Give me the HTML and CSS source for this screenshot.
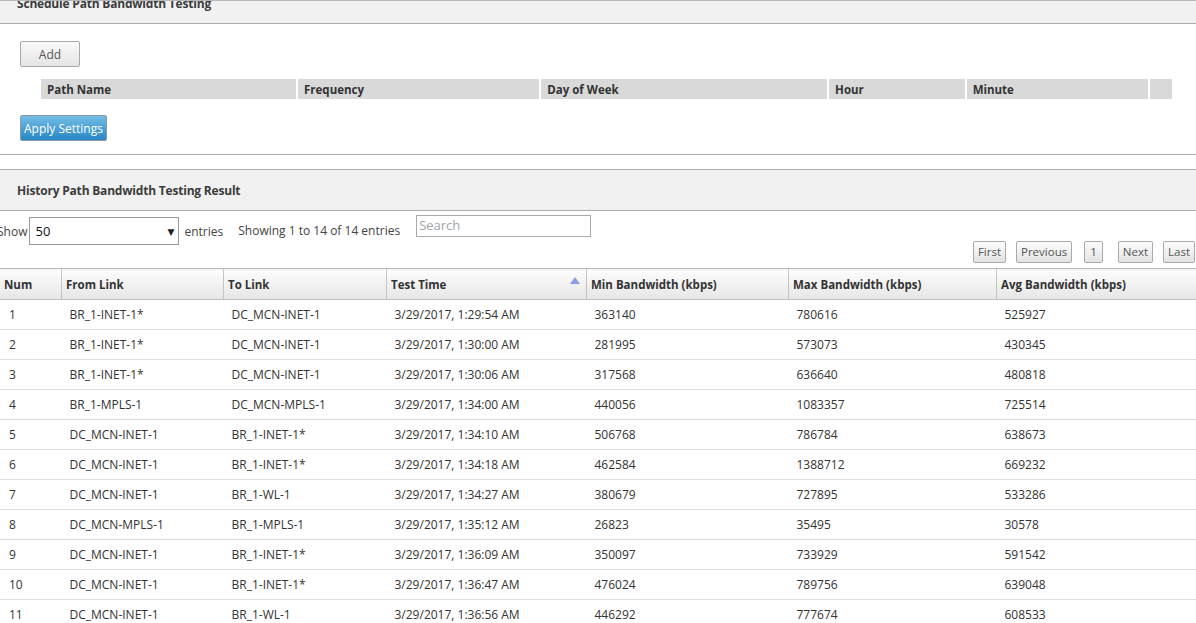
FILE: index.html
```html
<!DOCTYPE html>
<html>
<head>
<meta charset="utf-8">
<link rel="stylesheet" href="styles.css">
</head>
<body>
<div class="viewport">
  <section class="panel sched">
    <div class="panel-head"><h2>Schedule Path Bandwidth Testing</h2></div>
    <div class="panel-body">
      <button class="btn btn-add">Add</button>
      <table class="sched-table">
        <thead>
          <tr>
            <th class="c-path">Path Name</th>
            <th class="c-freq">Frequency</th>
            <th class="c-day">Day of Week</th>
            <th class="c-hour">Hour</th>
            <th class="c-min">Minute</th>
            <th class="c-act"></th>
          </tr>
        </thead>
      </table>
      <button class="btn btn-primary">Apply Settings</button>
    </div>
  </section>

  <section class="panel hist">
    <div class="panel-head"><h2>History Path Bandwidth Testing Result</h2></div>
    <div class="dt-wrap">
      <div class="dt-top">
        <label class="dt-len">Show
          <span class="select"><span class="select-val">50</span><span class="select-arrow">&#9660;</span></span>
          entries</label>
        <span class="dt-info">Showing 1 to 14 of 14 entries</span>
        <span class="dt-search">Search</span>
      </div>
      <div class="dt-pager">
        <span class="pbtn">First</span>
        <span class="pbtn">Previous</span>
        <span class="pbtn pnum">1</span>
        <span class="pbtn">Next</span>
        <span class="pbtn">Last</span>
      </div>
      <table class="data">
        <thead>
          <tr>
            <th class="w-num">Num</th>
            <th class="w-from">From Link</th>
            <th class="w-to">To Link</th>
            <th class="w-time sorted">Test Time</th>
            <th class="w-min">Min Bandwidth (kbps)</th>
            <th class="w-max">Max Bandwidth (kbps)</th>
            <th class="w-avg">Avg Bandwidth (kbps)</th>
          </tr>
        </thead>
        <tbody>
          <tr><td>1</td><td>BR_1-INET-1*</td><td>DC_MCN-INET-1</td><td>3/29/2017, 1:29:54 AM</td><td>363140</td><td>780616</td><td>525927</td></tr>
          <tr><td>2</td><td>BR_1-INET-1*</td><td>DC_MCN-INET-1</td><td>3/29/2017, 1:30:00 AM</td><td>281995</td><td>573073</td><td>430345</td></tr>
          <tr><td>3</td><td>BR_1-INET-1*</td><td>DC_MCN-INET-1</td><td>3/29/2017, 1:30:06 AM</td><td>317568</td><td>636640</td><td>480818</td></tr>
          <tr><td>4</td><td>BR_1-MPLS-1</td><td>DC_MCN-MPLS-1</td><td>3/29/2017, 1:34:00 AM</td><td>440056</td><td>1083357</td><td>725514</td></tr>
          <tr><td>5</td><td>DC_MCN-INET-1</td><td>BR_1-INET-1*</td><td>3/29/2017, 1:34:10 AM</td><td>506768</td><td>786784</td><td>638673</td></tr>
          <tr><td>6</td><td>DC_MCN-INET-1</td><td>BR_1-INET-1*</td><td>3/29/2017, 1:34:18 AM</td><td>462584</td><td>1388712</td><td>669232</td></tr>
          <tr><td>7</td><td>DC_MCN-INET-1</td><td>BR_1-WL-1</td><td>3/29/2017, 1:34:27 AM</td><td>380679</td><td>727895</td><td>533286</td></tr>
          <tr><td>8</td><td>DC_MCN-MPLS-1</td><td>BR_1-MPLS-1</td><td>3/29/2017, 1:35:12 AM</td><td>26823</td><td>35495</td><td>30578</td></tr>
          <tr><td>9</td><td>DC_MCN-INET-1</td><td>BR_1-INET-1*</td><td>3/29/2017, 1:36:09 AM</td><td>350097</td><td>733929</td><td>591542</td></tr>
          <tr><td>10</td><td>DC_MCN-INET-1</td><td>BR_1-INET-1*</td><td>3/29/2017, 1:36:47 AM</td><td>476024</td><td>789756</td><td>639048</td></tr>
          <tr><td>11</td><td>DC_MCN-INET-1</td><td>BR_1-WL-1</td><td>3/29/2017, 1:36:56 AM</td><td>446292</td><td>777674</td><td>608533</td></tr>
          <tr><td>12</td><td>DC_MCN-INET-1</td><td>BR_1-INET-1*</td><td>3/29/2017, 1:37:10 AM</td><td>451230</td><td>780112</td><td>612004</td></tr>
        </tbody>
      </table>
    </div>
  </section>
</div>
</body>
</html>
```

FILE: styles.css
```css
html, body {
  margin: 0;
  padding: 0;
  background: #fff;
  overflow: hidden;
}
body {
  font-family: "Open Sans", "Noto Sans", "DejaVu Sans", sans-serif;
  font-size: 12px;
  color: #333;
}
.viewport {
  width: 1196px;
  height: 623px;
  overflow: hidden;
  border-top: 1px solid #b4b8bb;
  box-sizing: border-box;
}

/* panels */
.panel {
  border-bottom: 1px solid #a7aeb3;
}
.panel-head {
  background: #f1f1f1;
  border-bottom: 1px solid #a7aeb3;
  padding-left: 17px;
}
.panel-head h2 {
  margin: 0;
  font-size: 12px;
  letter-spacing: -0.2px;
  font-weight: 700;
  color: #3c3c3c;
}
.sched .panel-head {
  height: 22px;
  overflow: hidden;
}
.sched .panel-head h2 {
  line-height: 18px;
  margin-top: -6px;
}
.sched .panel-body {
  padding: 17px 0 13px 20px;
}
.hist {
  margin-top: 14px;
  border-top: 1px solid #a7aeb3;
  border-bottom: none;
}
.hist .panel-head {
  height: 40px;
  display: flex;
  align-items: center;
}

/* buttons */
.btn {
  display: block;
  font-family: inherit;
  font-size: 12px;
  border-radius: 2px;
  cursor: pointer;
  padding: 0;
}
.btn-add {
  width: 60px;
  height: 26px;
  color: #555;
  border: 1px solid #a9a9a9;
  background: linear-gradient(#fafafa, #e4e4e4);
}
.btn-primary {
  width: 87px;
  height: 26px;
  color: #fff;
  border: 1px solid #8a9aa6;
  background: linear-gradient(#74bde6, #2786c4);
}

/* schedule table */
.sched-table {
  border-spacing: 2px;
  margin: 10px 0 14px 19px;
  width: 1135px;
}
.sched-table th {
  background: #d9d9d9;
  height: 20px;
  padding: 0 0 0 6px;
  text-align: left;
  font-weight: 700;
  font-size: 11.5px;
  color: #333;
}
.c-path { width: 250px; }
.c-freq { width: 236px; }
.c-day { width: 281px; }
.c-hour { width: 130px; }
.c-min { width: 176px; }
.c-act { width: 16px; }

/* data tables wrapper */
.dt-wrap {
  margin-left: -3px;
  padding-top: 6px;
}
.dt-top {
  display: flex;
  align-items: flex-start;
  height: 28px;
}
.dt-len {
  display: flex;
  align-items: center;
  height: 28px;
  color: #444;
}
.select {
  display: flex;
  align-items: center;
  justify-content: space-between;
  margin: 0 5px 0 2px;
  padding: 0 4px 0 5px;
  box-sizing: border-box;
  width: 150px;
  height: 28px;
  border: 1px solid #999;
  font-size: 13px;
  color: #111;
}
.select-arrow {
  font-size: 9px;
  color: #222;
}
.dt-info {
  margin-left: 15px;
  line-height: 28px;
  color: #444;
}
.dt-search {
  margin-left: 16px;
  margin-top: -2px;
  width: 175px;
  height: 22px;
  box-sizing: border-box;
  border: 1px solid #aaa;
  color: #9ea4aa;
  font-size: 13px;
  line-height: 18px;
  padding-left: 2px;
}
.dt-pager {
  display: flex;
  justify-content: flex-end;
  margin-top: -4px;
  margin-right: 1px;
  gap: 10px;
}
.pbtn {
  height: 22px;
  box-sizing: border-box;
  border: 1px solid #aaa;
  border-radius: 2px;
  background: linear-gradient(#fdfdfd, #e3e3e3);
  color: #555;
  line-height: 20px;
  padding: 0 4px;
  font-size: 11.5px;
}
.pnum {
  margin: 0 5px 0 2px;
  padding: 0 5px;
}

/* data table */
.data {
  border-collapse: collapse;
  margin-top: 5px;
  margin-left: 3px;
  width: 1210px;
  table-layout: fixed;
}
.data th {
  height: 30px;
  text-align: left;
  font-weight: 700;
  font-size: 11.5px;
  color: #333;
  padding: 0 0 0 4px;
  background: linear-gradient(#fdfdfd, #e6e6e6);
  border-top: 1px solid #b9bdc0;
  border-bottom: 1px solid #c2c2c2;
  border-left: 1px solid #c4c4c4;
  position: relative;
}
.data th:first-child { border-left: none; }
.data th.sorted::after {
  content: "";
  position: absolute;
  right: 6px;
  top: 8px;
  border-left: 5px solid transparent;
  border-right: 5px solid transparent;
  border-bottom: 7px solid #8e9ce8;
}
.w-num { width: 57px; }
.w-from { width: 157px; }
.w-to { width: 158px; }
.w-time { width: 195px; }
.w-min { width: 197px; }
.w-max { width: 203px; }
.w-avg { width: 209px; }
.data td {
  height: 29px;
  padding: 0 0 0 8px;
  border-bottom: 1px solid #e0e0e0;
  color: #333;
  white-space: nowrap;
}
.data td:first-child { padding-left: 9px; }
```
